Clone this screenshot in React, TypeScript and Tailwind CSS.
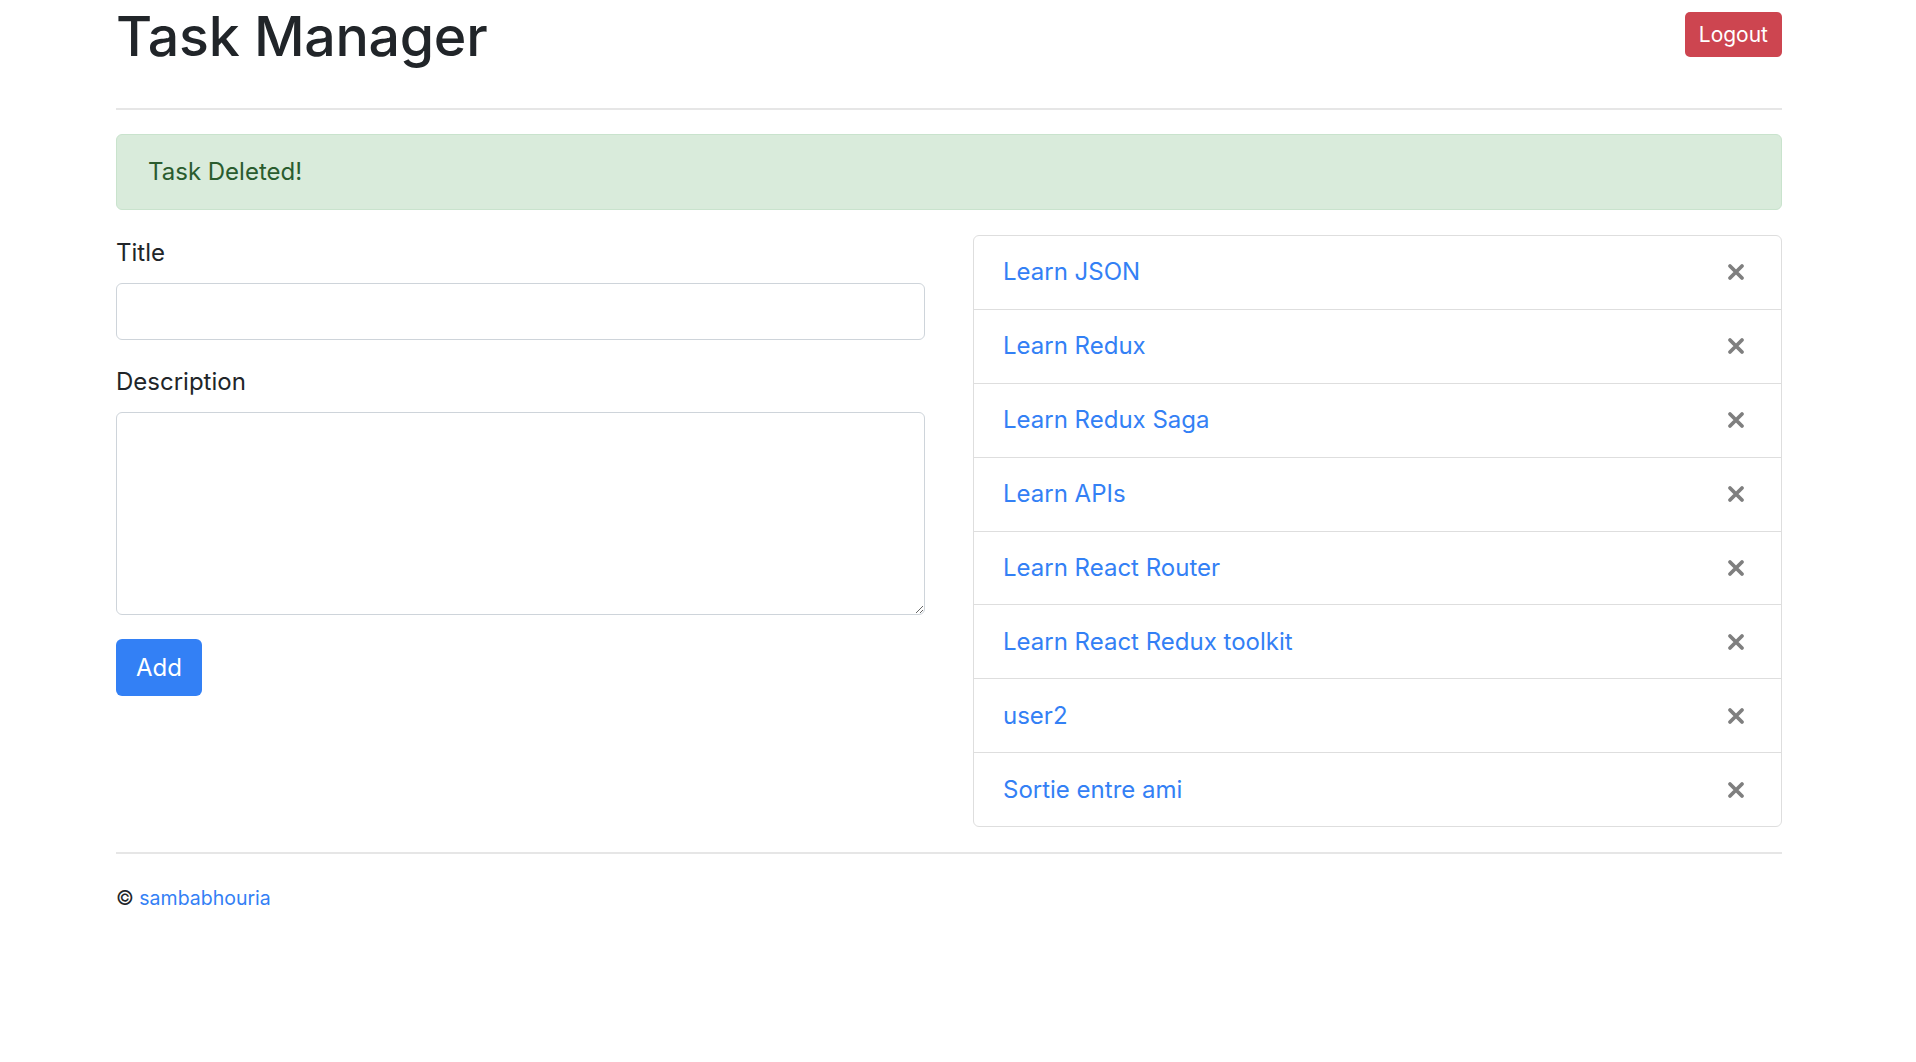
const tasks = [
    "Learn JSON",
    "Learn Redux",
    "Learn Redux Saga",
    "Learn APIs",
    "Learn React Router",
    "Learn React Redux toolkit",
    "user2",
    "Sortie entre ami",
];

function TimesIcon() {
    return (
        <svg width="18" height="18" viewBox="0 0 18 18" fill="none">
            <path d="M3 3 L15 15 M15 3 L3 15" stroke="#7f7f7f" strokeWidth="3.8" strokeLinecap="round" />
        </svg>
    );
}

export default function App() {
    return (
        <div className="min-h-screen bg-white text-[#212529] font-['Inter',sans-serif]">
            <div className="ml-[116px] w-[1666px]">

                {/* Header */}
                <div className="flex items-start justify-between">
                    <h1 className="text-[55.5px] leading-[72px] font-medium tracking-[-0.3px] mb-[12px]">Task Manager</h1>
                    <button className="mt-[12px] h-[45px] px-[14px] rounded-[5px] bg-[#cd4550] text-white text-[21px] leading-none">
                        Logout
                    </button>
                </div>

                <div className="mt-[24px] h-[2px] bg-[#e6e6e6]" />

                {/* Alert */}
                <div className="mt-[24px] h-[76px] px-[31px] flex items-center rounded-[6px] border-[1.5px] border-[#c9e3cd] bg-[#d9ebdb] text-[#2a5c2e] text-[24px]">
                    Task Deleted!
                </div>

                <div className="mt-[25px] grid grid-cols-2 gap-[48px]">
                    {/* Form */}
                    <form className="flex flex-col" onSubmit={(e) => e.preventDefault()}>
                        <label className="text-[24px] leading-[36px] mb-[12px]">Title</label>
                        <input
                            type="text"
                            className="h-[57px] w-full rounded-[6px] border-[1.5px] border-[#ced4da] px-[18px] text-[24px] outline-none"
                        />
                        <label className="mt-[24px] text-[24px] leading-[36px] mb-[12px]">Description</label>
                        <textarea
                            className="h-[203px] w-full rounded-[6px] border-[1.5px] border-[#ced4da] px-[18px] py-[9px] text-[24px] outline-none"
                        />
                        <div className="mt-[24px]">
                            <button
                                type="submit"
                                className="h-[57px] px-[20px] rounded-[6px] bg-[#3380f5] text-white text-[24px] leading-none"
                            >
                                Add
                            </button>
                        </div>
                    </form>

                    {/* Task list */}
                    <ul className="rounded-[6px] border-[1.5px] border-[#dedede] h-[592px] flex flex-col">
                        {tasks.map((t, i) => (
                            <li
                                key={t}
                                className={`flex-1 flex items-center justify-between pl-[29px] pr-[36px] ${i > 0 ? "border-t-[1.5px] border-[#dedede]" : ""}`}
                            >
                                <a href="#" className="text-[24px] text-[#3380f5]">{t}</a>
                                <button className="flex items-center justify-center">
                                    <TimesIcon />
                                </button>
                            </li>
                        ))}
                    </ul>
                </div>

                {/* Footer */}
                <div className="mt-[25px] h-[2px] bg-[#e6e6e6]" />
                <footer className="mt-[29px] text-[19.5px] leading-[30px]">
                    © <a href="#" className="text-[#3380f5]">sambabhouria</a>
                </footer>
            </div>
        </div>
    );
}
